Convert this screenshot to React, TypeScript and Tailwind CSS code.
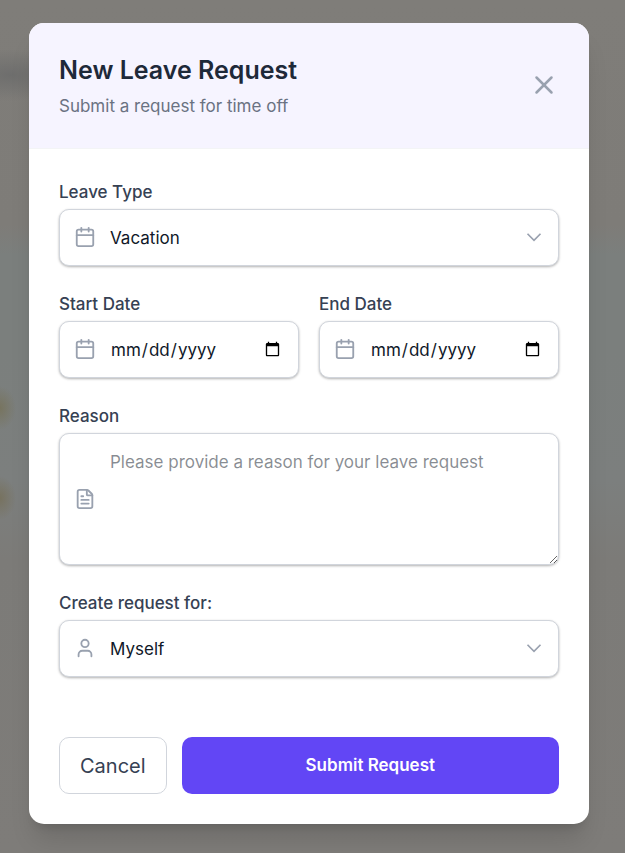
import type { ReactNode } from "react";
import { Calendar, FileText, User, X } from "lucide-react";

const fieldClass =
  "block w-full rounded-[10px] border border-gray-300 bg-white pl-[50px] text-[17px] leading-[28px] text-gray-900 shadow-[0_1px_3px_rgba(0,0,0,0.2),0_1px_2px_rgba(0,0,0,0.12)] outline-none focus:border-indigo-500";

function Field({ id, label, icon, children }: { id: string; label: string; icon: ReactNode; children: ReactNode }) {
  return (
    <div className="min-w-0 flex-1">
      <label htmlFor={id} className="mb-[3px] block text-[17px] leading-[27px] font-medium text-gray-700">
        {label}
      </label>
      <div className="relative">
        {children}
        <span className="pointer-events-none absolute inset-y-0 left-[15px] flex items-center pb-px text-gray-400">
          {icon}
        </span>
      </div>
    </div>
  );
}

function SelectBox({ id, options }: { id: string; options: string[] }) {
  return (
    <>
      <select id={id} className={`${fieldClass} h-[57px] appearance-none pr-[50px]`}>
        {options.map((option) => (
          <option key={option}>{option}</option>
        ))}
      </select>
      <span className="pointer-events-none absolute inset-y-0 right-3 flex items-center pb-px text-gray-400">
        <svg width="26" height="26" viewBox="0 0 20 20" fill="none" stroke="currentColor" strokeWidth="1.3">
          <path d="M5 7.5l5 5 5-5" />
        </svg>
      </span>
    </>
  );
}

export default function App() {
  return (
    <div className="flex min-h-screen items-start justify-center bg-[radial-gradient(ellipse_16px_22px_at_0px_408px,#77745f,transparent),radial-gradient(ellipse_16px_22px_at_0px_498px,#77725f,transparent),radial-gradient(ellipse_60px_26px_at_10px_75px,#6e6e6d,transparent),linear-gradient(#7f7d79_0px,#7e7c78_225px,#7b7f7d_255px,#7b7f7d_350px,#7c7f7e_480px,#7c7b78_560px,#7e7c79_853px)] pt-[23px] pr-9 pb-[29px] pl-[29px] font-['Inter',sans-serif]">
      <div
        role="dialog"
        aria-labelledby="dialog-title"
        className="w-full max-w-[560px] overflow-hidden rounded-[15px] bg-white shadow-[0_20px_25px_-5px_rgba(0,0,0,0.12),0_8px_10px_-6px_rgba(0,0,0,0.12)]"
      >
        <header className="flex items-center justify-between border-b border-gray-100 bg-[#f6f4ff] px-[30px] pt-[30px] pb-[28px]">
          <div>
            <h2 id="dialog-title" className="text-[25px] leading-[35px] font-semibold text-gray-800">
              New Leave Request
            </h2>
            <p className="mt-[5px] text-[17px] leading-[27px] text-gray-500">Submit a request for time off</p>
          </div>
          <button type="button" aria-label="Close" className="pb-1 text-gray-400">
            <X size={30} />
          </button>
        </header>
        <form className="p-[30px]">
          <div className="flex flex-col gap-[25px]">
            <Field id="leave-type" label="Leave Type" icon={<Calendar size={22} />}>
              <SelectBox id="leave-type" options={["Vacation", "Sick Leave", "Personal"]} />
            </Field>
            <div className="flex gap-5">
              <Field id="start-date" label="Start Date" icon={<Calendar size={22} />}>
                <input id="start-date" type="date" className={`${fieldClass} h-[57px] pr-[15px]`} />
              </Field>
              <Field id="end-date" label="End Date" icon={<Calendar size={22} />}>
                <input id="end-date" type="date" className={`${fieldClass} h-[57px] pr-[15px]`} />
              </Field>
            </div>
            <Field id="reason" label="Reason" icon={<FileText size={22} />}>
              <textarea
                id="reason"
                placeholder="Please provide a reason for your leave request"
                className={`${fieldClass} h-[132px] resize-y py-[14px] pr-[15px]`}
              />
            </Field>
            <Field id="request-for" label="Create request for:" icon={<User size={22} />}>
              <SelectBox id="request-for" options={["Myself", "Another employee"]} />
            </Field>
          </div>
          <div className="mt-[60px] flex gap-[15px]">
            <button
              type="button"
              className="h-[57px] rounded-[10px] border border-gray-300 bg-white px-5 text-[20px] text-gray-700"
            >
              Cancel
            </button>
            <button
              type="submit"
              className="h-[57px] flex-1 rounded-[10px] bg-[#6246f5] text-[17px] font-semibold text-white"
            >
              Submit Request
            </button>
          </div>
        </form>
      </div>
    </div>
  );
}
